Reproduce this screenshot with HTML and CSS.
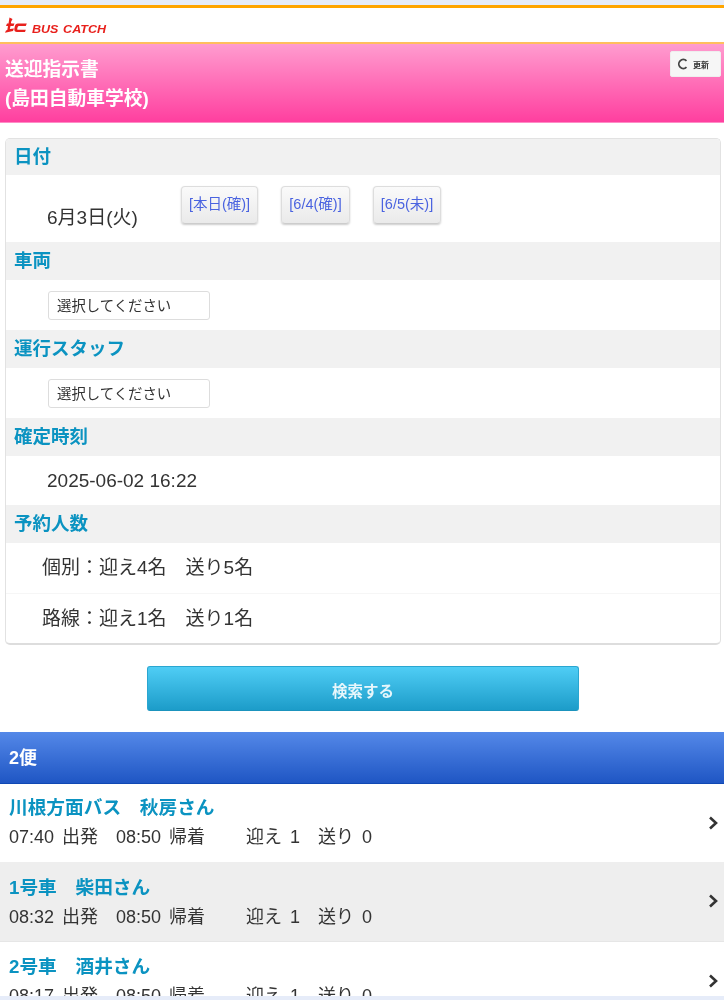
FILE: index.html
```html
<!DOCTYPE html>
<html lang="ja">
<head>
<meta charset="utf-8">
<title>送迎指示書</title>
<link rel="stylesheet" href="styles.css">
</head>
<body>
<div class="page">
  <div class="top-strip"></div>
  <header class="brand">
    <svg class="logo-mark" width="22" height="17" viewBox="0 0 22 17" aria-hidden="true">
      <path d="M4.500 0.500 L7.500 2 L6 5 Q5.500 6.500 7 6.500 L9.500 6.500 L8.500 9 L5.500 9 L4.800 12 L9 11.500 L8 14 L0 15.800 L1 13.500 L2.300 13 L3 9 L1 9 L2 6.500 L3.500 6.500 Z" fill="#e8201c"/>
      <path d="M21.800 6.500 L13 6.500 Q10.300 6.500 9.800 9.500 L9.300 12 Q9.100 15 12 15 L20 15 L20.800 12.800 L12.800 12.800 Q12 12.800 12.200 12 L12.600 10.200 Q12.900 9 14 9 L20.800 9 Z" fill="#e8201c"/>
    </svg>
    <span class="logo-text">BUS CATCH</span>
  </header>
  <section class="title-bar">
    <h1 class="title">送迎指示書<br>(島田自動車学校)</h1>
    <button class="refresh">
      <svg width="12" height="12" viewBox="0 0 12 12" aria-hidden="true"><path d="M9.500 2.800 A4.500 4.500 0 1 0 9.500 9.200" fill="none" stroke="#444" stroke-width="1.800"/></svg>
      <span>更新</span>
    </button>
  </section>

  <section class="card">
    <h2 class="card-head card-head-first">日付</h2>
    <div class="date-row">
      <span class="date">6月3日(火)</span>
      <a class="day-btn day-a">[本日(確)]</a>
      <a class="day-btn day-b">[6/4(確)]</a>
      <a class="day-btn day-c">[6/5(未)]</a>
    </div>
    <h2 class="card-head">車両</h2>
    <div class="select-row"><div class="select">選択してください</div></div>
    <h2 class="card-head">運行スタッフ</h2>
    <div class="select-row"><div class="select">選択してください</div></div>
    <h2 class="card-head">確定時刻</h2>
    <div class="time-row">2025-06-02 16:22</div>
    <h2 class="card-head">予約人数</h2>
    <div class="count-row count-first">個別：迎え4名　送り5名</div>
    <div class="count-row">路線：迎え1名　送り1名</div>
  </section>

  <div class="search-wrap"><button class="search">検索する</button></div>

  <h2 class="trip-head">2便</h2>
  <ul class="list">
    <li class="item">
      <div class="item-body">
        <div class="item-title">川根方面バス　秋房さん</div>
        <div class="item-sub"><span class="times">07:40 出発　08:50 帰着</span><span>迎え 1　送り 0</span></div>
      </div>
      <svg class="chev" width="10" height="14" viewBox="0 0 10 14" aria-hidden="true"><path d="M2 1.500 L8 7 L2 12.500" fill="none" stroke="#333" stroke-width="2.600"/></svg>
    </li>
    <li class="item alt">
      <div class="item-body">
        <div class="item-title">1号車　柴田さん</div>
        <div class="item-sub"><span class="times">08:32 出発　08:50 帰着</span><span>迎え 1　送り 0</span></div>
      </div>
      <svg class="chev" width="10" height="14" viewBox="0 0 10 14" aria-hidden="true"><path d="M2 1.500 L8 7 L2 12.500" fill="none" stroke="#333" stroke-width="2.600"/></svg>
    </li>
    <li class="item last">
      <div class="item-body">
        <div class="item-title">2号車　酒井さん</div>
        <div class="item-sub"><span class="times">08:17 出発　08:50 帰着</span><span>迎え 1　送り 0</span></div>
      </div>
      <svg class="chev" width="10" height="14" viewBox="0 0 10 14" aria-hidden="true"><path d="M2 1.500 L8 7 L2 12.500" fill="none" stroke="#333" stroke-width="2.600"/></svg>
    </li>
  </ul>
  <div class="bottom-strip"></div>
</div>
</body>
</html>
```
FILE: styles.css
```css
* { box-sizing: border-box; }
html, body { margin: 0; padding: 0; background: #fff; }
body { font-family: "Liberation Sans", "Noto Sans CJK JP", sans-serif; color: #333; }
.page { position: relative; width: 724px; height: 1000px; overflow: hidden; filter: blur(0.6px); }
.top-strip { height: 5px; background: #e6ecf9; }
.brand { height: 39px; border-top: 3px solid #ffa500; border-bottom: 2px solid #ffbe5e; background: #fff; display: flex; align-items: center; padding: 0 0 0 5px; }
.logo-mark { display: block; margin-top: 1px; }
.logo-text { font-size: 11px; font-weight: bold; font-style: italic; color: #e8201c; margin-left: 5px; margin-top: 7px; white-space: nowrap; word-spacing: 1px; transform: scaleX(1.14); transform-origin: left center; }
.title-bar { height: 79px; background: linear-gradient(#ff9ccf, #ff3f9f); display: flex; justify-content: space-between; align-items: flex-start; border-bottom: 1px solid #ff8cc6; }
.title { margin: 11px 0 0 5px; font-size: 18.750px; line-height: 29px; font-weight: bold; color: #fff; }
.refresh { margin: 7px 3px 0 0; width: 51px; height: 26px; background: #f6f6f6; border: 1px solid #eee; border-radius: 2px; padding: 0 0 0 6px; display: flex; align-items: center; gap: 4px; font: bold 8px "Liberation Sans", "Noto Sans CJK JP", sans-serif; color: #333; }
.card { margin: 15px 3px 0 5px; height: 507px; border: 1px solid #e2e2e2; border-bottom: 2px solid #ddd; border-radius: 5px; overflow: hidden; background: #fff; }
.card-head { margin: 0; background: #f1f1f1; padding-left: 8px; font-size: 18.500px; font-weight: bold; color: #0b93c1; height: 38px; line-height: 38px; }
.card-head-first { height: 36px; line-height: 36px; }
.date-row { height: 67px; display: flex; align-items: flex-start; padding-left: 41px; }
.date { font-size: 19px; margin-top: 32px; line-height: 22px; width: 91px; color: #333; white-space: nowrap; }
.day-btn { margin-top: 11px; height: 38px; border: 1px solid #ddd; border-bottom-color: #ccc; border-radius: 4px; background: linear-gradient(#fafafa, #eaeaea); box-shadow: 0 1px 2px #ccc; font-size: 14.500px; line-height: 34px; color: #4a63e0; text-align: center; white-space: nowrap; }
.day-a { width: 77px; margin-left: 43px; }
.day-b { width: 69px; margin-left: 23px; }
.day-c { width: 68px; margin-left: 23px; }
.select-row { height: 50px; padding: 11px 0 0 42px; }
.select { width: 162px; height: 29px; border: 1px solid #ddd; border-radius: 3px; background: #fff; padding-left: 8px; font-size: 14.400px; line-height: 28px; color: #333; white-space: nowrap; }
.time-row { height: 49px; padding-left: 41px; font-size: 19px; line-height: 49px; color: #333; }
.count-row { height: 49px; padding-left: 36px; font-size: 19px; line-height: 49px; color: #333; }
.count-first { height: 51px; border-bottom: 1px solid #f6f6f6; }
.search-wrap { display: flex; justify-content: center; padding: 21px 0 0 2px; }
.search { width: 432px; height: 45px; border: 1px solid #2aa6d0; border-bottom-color: #1b93bd; border-radius: 3px; background: linear-gradient(#4fcdf5, #1c9cc9); color: #e6f6fb; font: bold 15.500px "Liberation Sans", "Noto Sans CJK JP", sans-serif; padding: 2px 0 0; }
.trip-head { margin: 21px 0 0; height: 52px; background: linear-gradient(#5488e8, #1f56c4); color: #fff; font-size: 18px; font-weight: bold; line-height: 52px; padding-left: 9px; border-bottom: 1px solid #0f48b4; }
.list { list-style: none; margin: 0; padding: 0; }
.item { height: 78px; display: flex; align-items: center; justify-content: space-between; padding: 0 6px 0 9px; background: #fff; }
.alt { background: #eee; border-bottom: 1px solid #e6e6e6; height: 80px; }
.item-body { align-self: flex-start; padding-top: 11px; }
.alt .item-body { padding-top: 13px; }
.last .item-body { padding-top: 12px; }
.item-title { font-size: 18.700px; font-weight: bold; color: #0b93c1; line-height: 26px; }
.item-sub { font-size: 18px; line-height: 32px; color: #333; display: flex; white-space: nowrap; word-spacing: 3px; }
.times { width: 237px; }
.chev { margin-bottom: 1px; }
.bottom-strip { position: absolute; left: 0; right: 0; bottom: 0; height: 4px; background: #e6ecf9; }
```
